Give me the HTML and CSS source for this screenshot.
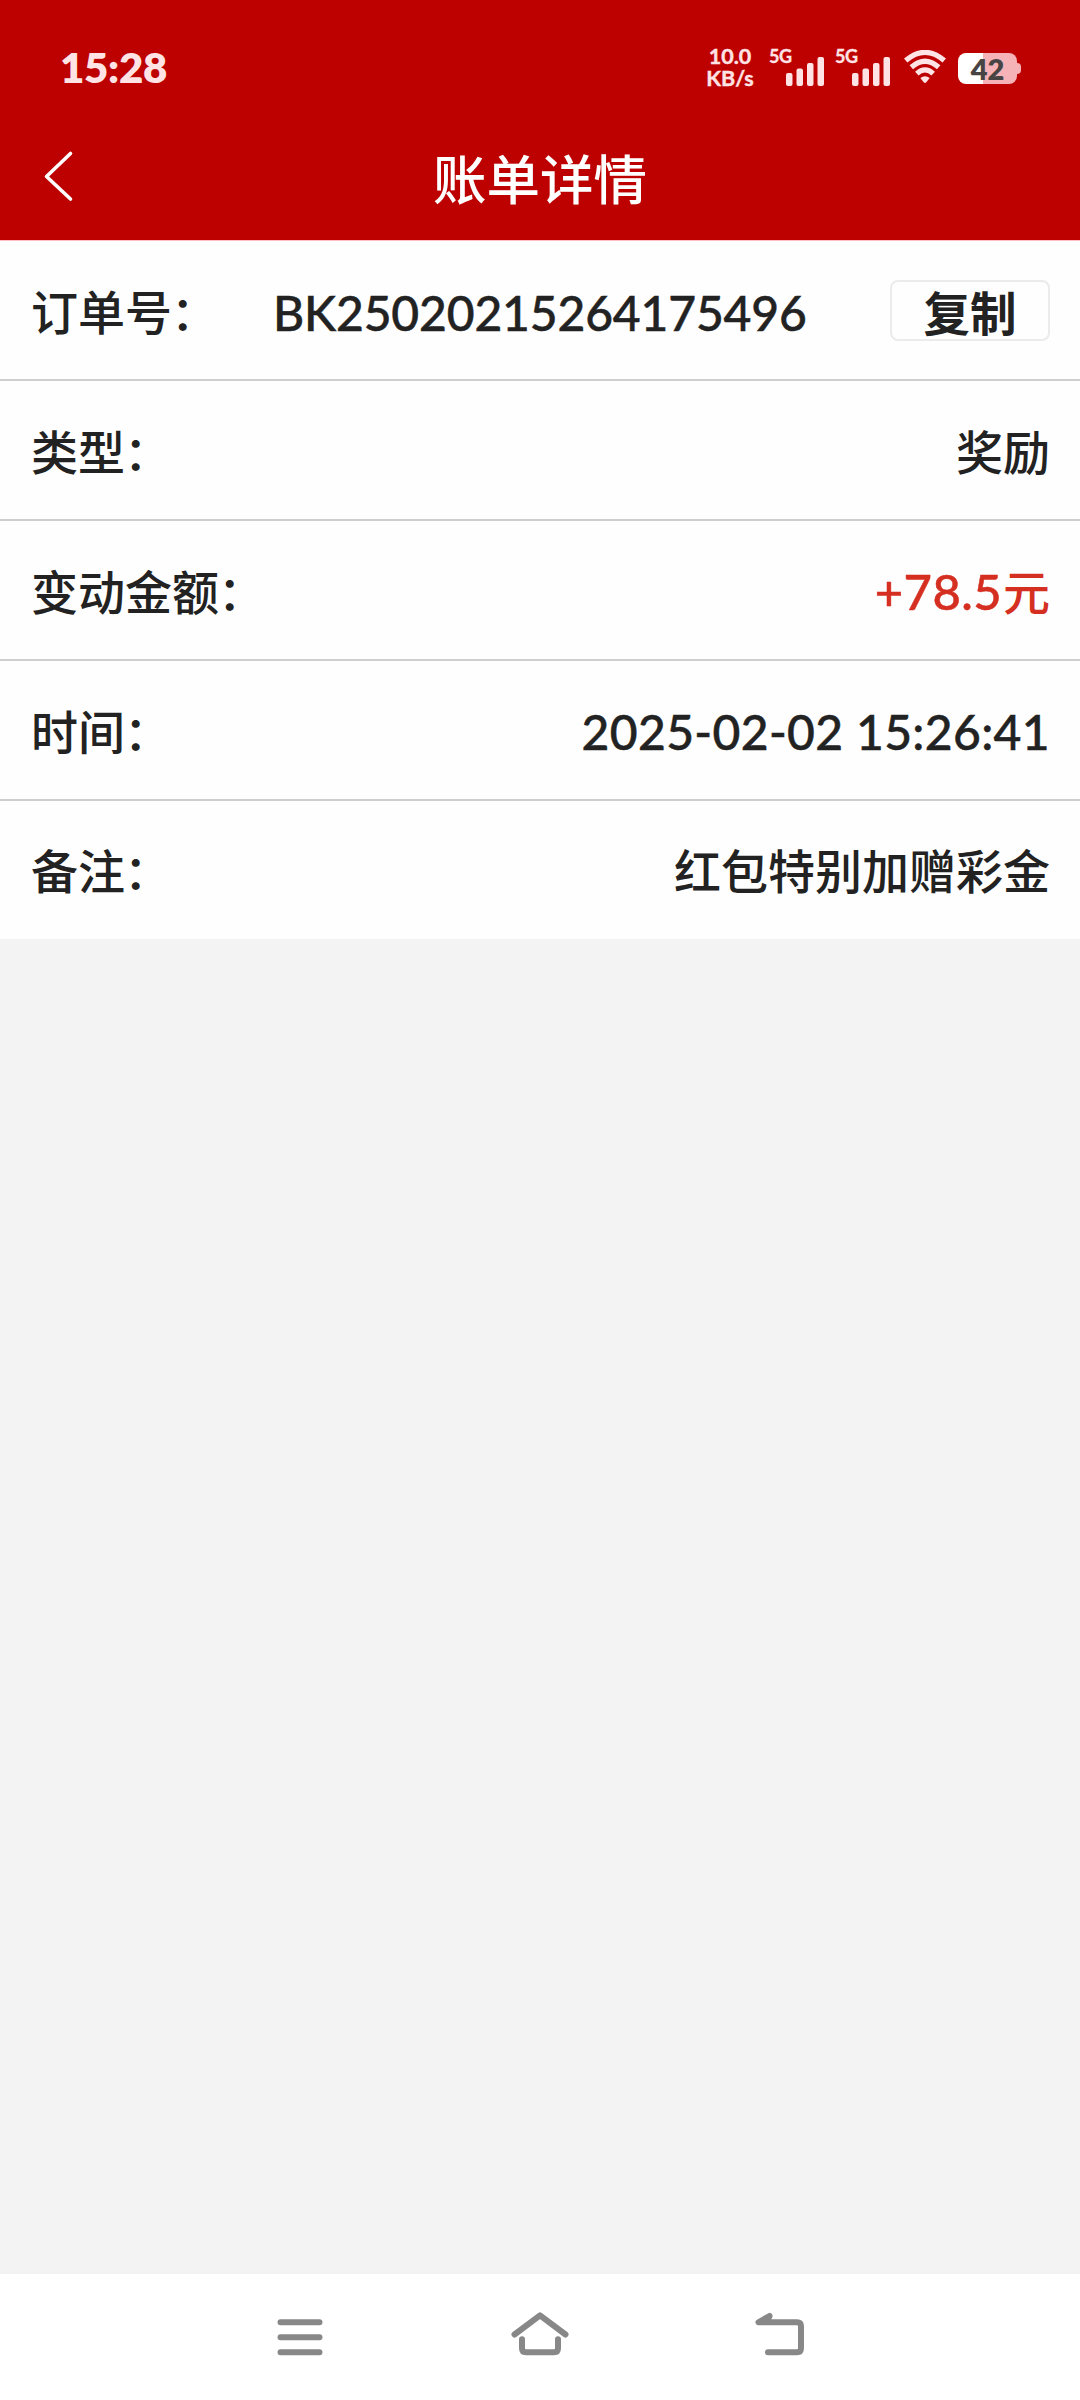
FILE: index.html
```html
<!DOCTYPE html>
<html lang="zh-CN">
<head>
<meta charset="utf-8">
<title>账单详情</title>
<link rel="stylesheet" href="styles.css">
</head>
<body>
<div class="screen">
  <header class="header">
    <div class="status">
      <span class="clock">15:28</span>
      <div class="indicators">
        <div class="speed"><span class="rate">10.0</span><span class="unit">KB/s</span></div>
        <div class="network">
          <span class="generation">5G</span>
          <svg class="bars" width="38" height="29" viewBox="0 0 38 29"><rect x="0" y="16" width="6.5" height="13" rx="2"/><rect x="10.5" y="11.5" width="6.5" height="17.5" rx="2"/><rect x="21" y="6" width="6.5" height="23" rx="2"/><rect x="31.5" y="0" width="6.5" height="29" rx="2"/></svg>
        </div>
        <div class="network">
          <span class="generation">5G</span>
          <svg class="bars" width="38" height="29" viewBox="0 0 38 29"><rect x="0" y="16" width="6.5" height="13" rx="2"/><rect x="10.5" y="11.5" width="6.5" height="17.5" rx="2"/><rect x="21" y="6" width="6.5" height="23" rx="2"/><rect x="31.5" y="0" width="6.5" height="29" rx="2"/></svg>
        </div>
        <svg class="wifi" width="42" height="34" viewBox="0 0 42 34">
          <g fill="none" stroke="#ffe3e5" stroke-width="5.2"><path d="M1.7 10.6Q21-5.8 40.3 10.6"/><path d="M7.3 17.3Q21 5.2 34.7 17.3"/><path d="M12.8 23.6Q21 16.2 29.2 23.6"/></g>
          <path d="M16.3 28Q21 24.6 25.7 28L22.3 32.3Q21 33.8 19.7 32.3Z" fill="#ffe3e5"/>
        </svg>
        <div class="battery"><span class="level">42</span></div>
      </div>
    </div>
    <div class="titlebar">
      <svg class="back" width="32" height="52" viewBox="0 0 32 52"><path d="M28.5 3.5L4.5 26.5L28.5 49" fill="none" stroke="#fff" stroke-width="3.6" stroke-linecap="round" stroke-linejoin="round"/></svg>
      <h1 class="title">账单详情</h1>
    </div>
  </header>
  <main class="details">
    <div class="row"><span class="label">订单号<span class="colon">：</span></span><span class="value order">BK25020215264175496</span><button class="copy">复制</button></div>
    <div class="row"><span class="label">类型<span class="colon">：</span></span><span class="value">奖励</span></div>
    <div class="row"><span class="label">变动金额<span class="colon">：</span></span><span class="value amount"><span class="number">+78.5</span>元</span></div>
    <div class="row"><span class="label">时间<span class="colon">：</span></span><span class="value time">2025-02-02 15:26:41</span></div>
    <div class="row"><span class="label">备注<span class="colon">：</span></span><span class="value">红包特别加赠彩金</span></div>
  </main>
  <nav class="navbar">
    <svg width="60" height="60" viewBox="0 0 60 60"><path d="M10.5 15.3H49.5M10.5 30.3H49.5M10.5 45.3H49.5"/></svg>
    <svg width="60" height="60" viewBox="0 0 60 60"><path d="M4.5 27.5L30 8.4L55.5 27.5M12 32.3V41.3Q12 45.3 16 45.3H44Q48 45.3 48 41.3V32.3"/></svg>
    <svg width="60" height="60" viewBox="0 0 60 60"><path d="M19.5 9L8.5 15.3H47Q51 15.3 51 19.3V41.3Q51 45.3 47 45.3H18M19.5 9L17.5 14"/></svg>
  </nav>
</div>
</body>
</html>
```
FILE: styles.css
```css
* { box-sizing: border-box; }
body {
  margin: 0;
  font-family: Lato, "Noto Sans CJK SC", sans-serif;
  font-weight: 500;
  color: #222;
}
.screen {
  display: flex;
  flex-direction: column;
  width: 1080px;
  height: 2400px;
  background: #f3f3f3;
}
.header {
  display: flex;
  flex-direction: column;
  height: 241px;
  background: #bd0000;
  border-bottom: 1px solid #fdbfc3;
}
.status {
  display: flex;
  align-items: center;
  justify-content: space-between;
  height: 136px;
  padding: 0 60px;
  color: #ffe3e5;
  font-weight: 700;
}
.clock { margin-top: -3px; font-size: 42px; font-weight: 800; line-height: 50px; letter-spacing: -0.3px; }
.indicators { display: flex; align-items: center; }
.speed {
  display: flex;
  flex-direction: column;
  align-items: center;
  width: 48px;
  margin: -2px 15px 0 0;
  font-size: 21.5px;
  line-height: 22px;
  -webkit-text-stroke: 0.4px;
}
.network { display: flex; align-items: flex-start; height: 37px; margin-right: 11px; }
.generation { width: 17px; margin-top: -1px; font-size: 18px; line-height: 14px; white-space: nowrap; letter-spacing: -0.5px; -webkit-text-stroke: 0.3px; }
.bars { margin-top: 7px; fill: #ffe3e5; }
.wifi { margin: -2px 12px 0 3px; }
.battery {
  position: relative;
  display: flex;
  align-items: center;
  justify-content: center;
  width: 59px;
  height: 31px;
  margin-right: 3px;
  border-radius: 8px;
  background: linear-gradient(90deg, #fff 25px, #f5b2b7 25px);
}
.battery::after {
  content: "";
  position: absolute;
  left: 59px;
  top: 10px;
  width: 4px;
  height: 11px;
  border-radius: 0 4px 4px 0;
  background: #f5b2b7;
}
.level { color: #484444; font-size: 29px; line-height: 31px; font-weight: 800; }
.titlebar {
  display: grid;
  grid-template-columns: 90px 1fr 90px;
  align-items: center;
  height: 104px;
}
.back { margin: -25px 0 0 42px; }
.title {
  margin: -18px 0 0;
  color: #fff;
  text-align: center;
  font-size: 53.5px;
  font-weight: 500;
  line-height: 72px;
}
.details { background: #fefefe; }
.row {
  display: flex;
  align-items: center;
  justify-content: space-between;
  height: 140px;
  padding: 3px 30px 0 31px;
  border-bottom: 2px solid #cecece;
  font-size: 47px;
  line-height: 68px;
  white-space: nowrap;
}
.row:last-child { height: 138px; padding-top: 2px; border-bottom: 0; }
.colon { margin-left: -1px; }
.order, .time, .number { -webkit-text-stroke: 0.5px; }
.order { flex: 1; margin: 3px 0 0 55px; font-size: 48px; letter-spacing: -0.15px; }
.time { font-size: 48px; letter-spacing: 0.35px; }
.number { margin-right: 1px; font-size: 49px; letter-spacing: 0.4px; }
.amount { color: #d52f21; }
.copy {
  display: flex;
  align-items: center;
  justify-content: center;
  width: 160px;
  height: 61px;
  margin-top: -3px;
  padding: 6px 0 0;
  border: 2px solid #ebebeb;
  border-radius: 8px;
  background: #fefefe;
  color: #222;
  font: 700 46.5px/60px Lato, "Noto Sans CJK SC", sans-serif;
}
.navbar {
  display: flex;
  justify-content: center;
  gap: 180px;
  height: 126px;
  margin-top: auto;
  padding-top: 33px;
  background: #fff;
}
.navbar svg { fill: none; stroke: #888; stroke-width: 6; stroke-linecap: round; stroke-linejoin: round; }
```
